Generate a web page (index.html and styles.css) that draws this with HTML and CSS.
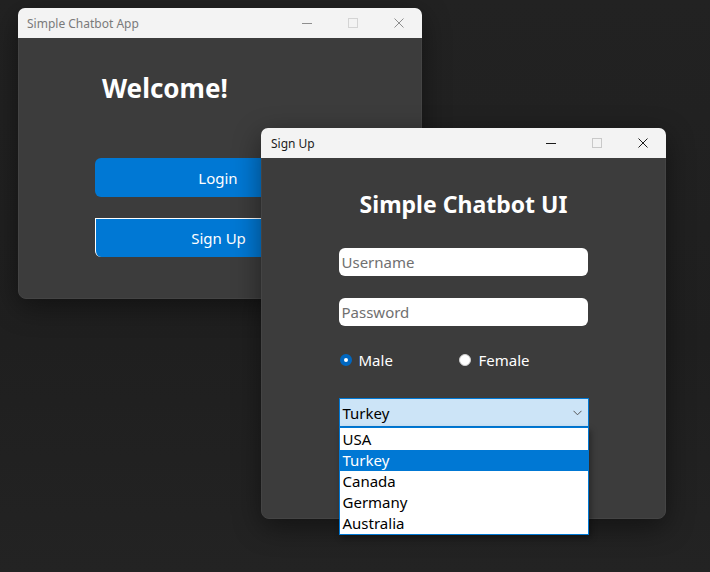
FILE: index.html
```html
<!DOCTYPE html>
<html>
<head>
<meta charset="utf-8">
<link rel="stylesheet" href="styles.css">
</head>
<body>
<div class="desktop">
  <div class="window win-main">
    <div class="titlebar inactive">
      <span class="title">Simple Chatbot App</span>
      <div class="controls">
        <div class="ctl"><svg width="10" height="10" viewBox="0 0 10 10"><path d="M0 5.5H10" class="stroke"/></svg></div>
        <div class="ctl"><svg width="10" height="10" viewBox="0 0 10 10"><rect x="0.5" y="0.5" width="9" height="9" class="stroke-dis"/></svg></div>
        <div class="ctl"><svg width="10" height="10" viewBox="0 0 10 10"><path d="M0.5 0.5L9.5 9.5M9.5 0.5L0.5 9.5" class="stroke"/></svg></div>
      </div>
    </div>
    <div class="body main-body">
      <h1 class="welcome">Welcome!</h1>
      <button class="btn">Login</button>
      <button class="btn focus">Sign Up</button>
    </div>
  </div>

  <div class="window win-signup">
    <div class="titlebar active">
      <span class="title">Sign Up</span>
      <div class="controls">
        <div class="ctl"><svg width="10" height="10" viewBox="0 0 10 10"><path d="M0 5.5H10" class="stroke"/></svg></div>
        <div class="ctl"><svg width="10" height="10" viewBox="0 0 10 10"><rect x="0.5" y="0.5" width="9" height="9" class="stroke-dis"/></svg></div>
        <div class="ctl"><svg width="10" height="10" viewBox="0 0 10 10"><path d="M0.5 0.5L9.5 9.5M9.5 0.5L0.5 9.5" class="stroke"/></svg></div>
      </div>
    </div>
    <div class="body signup-body">
      <h2 class="heading">Simple Chatbot UI</h2>
      <div class="form">
        <div class="input">Username</div>
        <div class="input gap2">Password</div>
        <div class="radios">
          <label class="radio"><span class="dot checked"></span>Male</label>
          <label class="radio"><span class="dot"></span>Female</label>
        </div>
        <div class="combo">
          <span>Turkey</span>
          <svg width="9" height="6" viewBox="0 0 9 6"><path d="M0.5 0.8L4.5 4.8L8.5 0.8" fill="none" stroke="#555" stroke-width="1"/></svg>
          <ul class="list">
            <li>USA</li>
            <li class="sel">Turkey</li>
            <li>Canada</li>
            <li>Germany</li>
            <li>Australia</li>
          </ul>
        </div>
      </div>
    </div>
  </div>
</div>
</body>
</html>
```
FILE: styles.css
```css
* { box-sizing: border-box; }
html, body {
  margin: 0;
  padding: 0;
  background: #202020;
  font-family: "Noto Sans", "Open Sans", sans-serif;
}
.desktop {
  position: relative;
  width: 710px;
  height: 572px;
  overflow: hidden;
  background: linear-gradient(180deg, #222 0%, #1f1f1f 60%, #232323 100%);
}
.window {
  position: absolute;
  background: #3c3c3c;
  border-radius: 8px;
  border: 1px solid #444;
  display: flex;
  flex-direction: column;
  box-shadow: 0 8px 28px rgba(0,0,0,0.45);
}
.win-main { left: 18px; top: 8px; width: 404px; height: 291px; }
.win-signup { left: 261px; top: 128px; width: 405px; height: 391px; }
.titlebar {
  height: 30px;
  flex: none;
  background: #f3f3f3;
  border-radius: 7px 7px 0 0;
  display: flex;
  align-items: center;
  margin: -1px -1px 0 -1px;
}
.title {
  font-size: 12px;
  padding-left: 9px;
  flex: 1;
}
.active .title { padding-left: 10px; }
.inactive .title { color: #7a7a7a; }
.active .title { color: #1b1b1b; }
.controls { display: flex; height: 30px; }
.ctl {
  width: 46px;
  height: 30px;
  display: flex;
  align-items: center;
  justify-content: center;
}
.ctl svg { display: block; }
.stroke { stroke-width: 1; fill: none; }
.inactive .stroke { stroke: #8e8e8e; }
.active .stroke { stroke: #1b1b1b; }
.stroke-dis { fill: none; stroke: #c9c9c9; stroke-width: 1; }
.inactive .stroke-dis { stroke: #d4d4d4; }

.body { flex: 1; display: flex; flex-direction: column; }
.main-body { padding: 37px 0 0 76px; }
.welcome {
  margin: 0 0 0 7px;
  font-size: 26px;
  line-height: 1;
  font-weight: 700;
  color: #fff;
}
.btn {
  margin-top: 57px;
  width: 246px;
  height: 39px;
  border: none;
  border-radius: 6px;
  background: #0078d4;
  color: #fff;
  font-family: inherit;
  font-size: 15px;
  padding: 0;
}
.btn.focus {
  margin-top: 21px;
  height: 39px;
  border-top: 1px solid #fff;
  border-left: 1px solid #fff;
  border-radius: 0 6px 6px 6px;
}

.signup-body { align-items: center; padding-top: 35px; }
.heading {
  margin: 0;
  font-size: 23px;
  line-height: 1;
  font-weight: 700;
  color: #fff;
}
.form {
  margin-top: 32px;
  width: 250px;
  display: flex;
  flex-direction: column;
}
.input {
  width: 249px;
  height: 28px;
  background: #fff;
  border-radius: 6px;
  color: #707070;
  font-size: 15px;
  line-height: 28px;
  padding-left: 3px;
}
.gap2 { margin-top: 22px; }
.radios {
  margin-top: 24px;
  height: 20px;
  display: flex;
  align-items: center;
  gap: 0;
}
.radio {
  display: flex;
  align-items: center;
  color: #fff;
  font-size: 15px;
  width: 119px;
  gap: 7px;
}
.radio + .radio { gap: 8px; }
.dot {
  width: 12px;
  height: 12px;
  border-radius: 50%;
  background: #fff;
  border: 1px solid #cfcfcf;
  flex: none;
  margin-left: 1px;
}
.dot.checked {
  background: #fff;
  border: 4px solid #0067c0;
}
.combo {
  position: relative;
  margin-top: 28px;
  width: 250px;
  height: 29px;
  background: #cce4f7;
  border: 1px solid #0078d4;
  display: flex;
  align-items: center;
  justify-content: space-between;
  padding: 0 6px 0 3px;
  font-size: 15px;
  color: #000;
}
.list {
  position: absolute;
  left: -1px;
  top: 28px;
  width: 250px;
  margin: 0;
  padding: 1px 0 0;
  list-style: none;
  background: #fff;
  border: 1px solid #0078d4;
  box-shadow: 2px 3px 6px rgba(0,0,0,0.35);
  z-index: 5;
}
.list li {
  height: 21px;
  line-height: 21px;
  padding-left: 3px;
  font-size: 15px;
  color: #000;
}
.list li.sel { background: #0078d4; color: #fff; }
```
